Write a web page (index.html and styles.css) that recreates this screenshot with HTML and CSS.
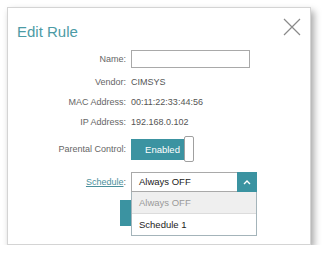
FILE: index.html
```html
<!DOCTYPE html>
<html lang="en">
<head>
    <meta charset="UTF-8">
    <meta name="viewport" content="width=device-width, initial-scale=1.0">
    <title>Edit Rule</title>
    <link rel="stylesheet" href="styles.css">
</head>
<body>
    <div class="card">
        <div class="header">
            <h1>Edit Rule</h1>
            <span class="close">
                <svg width="18" height="18" viewBox="0 0 18 18">
                    <path d="M1 1 L17 17 M17 1 L1 17" stroke="#8a8a8a" stroke-width="1.2" fill="none"/>
                </svg>
            </span>
        </div>

        <div class="row row-name">
            <label>Name:</label>
            <input type="text" class="name-input">
        </div>
        <div class="row row-text">
            <label>Vendor:</label>
            <span class="value">CIMSYS</span>
        </div>
        <div class="row row-text">
            <label>MAC Address:</label>
            <span class="value">00:11:22:33:44:56</span>
        </div>
        <div class="row row-text">
            <label>IP Address:</label>
            <span class="value">192.168.0.102</span>
        </div>
        <div class="row row-toggle">
            <label>Parental Control:</label>
            <div class="toggle">
                <span class="toggle-on">Enabled</span>
                <span class="toggle-knob"></span>
            </div>
        </div>
        <div class="row row-select">
            <label><a href="#" class="link">Schedule</a>:</label>
            <div class="select">
                <span class="select-text">Always OFF</span>
                <span class="select-arrow">
                    <svg width="8" height="6" viewBox="0 0 8 6">
                        <polyline points="1,5 4,2 7,5" stroke="#fff" stroke-width="1.4" fill="none"/>
                    </svg>
                </span>
                <ul class="options">
                    <li class="selected">Always OFF</li>
                    <li>Schedule 1</li>
                </ul>
            </div>
        </div>
        <div class="actions">
            <button class="save">Save</button>
        </div>
    </div>
</body>
</html>
```

FILE: styles.css
```css
body {
    margin: 0;
    padding: 0;
    background-color: #fff;
    font-family: 'Liberation Sans', Arial, sans-serif;
    color: #555;
}

.card {
    margin: 7px 0 0 7px;
    width: 302px;
    height: 236px;
    border: 1px solid #d4d4d4;
    background-color: #fff;
    box-shadow: 3px 4px 7px rgba(0, 0, 0, 0.35);
}

.header {
    display: flex;
    justify-content: space-between;
    align-items: flex-start;
    padding: 10px 9px 0 9px;
    height: 32px;
}

h1 {
    margin: 5px 0 0 0;
    font-size: 15px;
    font-weight: normal;
    color: #4c9ba5;
    line-height: 17px;
}

.close {
    width: 18px;
    height: 18px;
}

.row {
    display: grid;
    grid-template-columns: 118px 1fr;
    column-gap: 5px;
    align-items: center;
    font-size: 9px;
}

.row label {
    text-align: right;
    color: #666;
}

.value {
    color: #555;
}

.row-name {
    height: 18px;
    margin-bottom: 4px;
}

.name-input {
    width: 117px;
    height: 16px;
    margin: 0;
    padding: 0;
    border: 1px solid #a9a9a9;
}

.row-text {
    height: 20px;
}

.row-toggle {
    height: 26px;
    margin-top: 4px;
}

.toggle {
    display: flex;
    align-items: center;
}

.toggle-on {
    width: 53px;
    height: 21px;
    line-height: 21px;
    background-color: #3b93a1;
    color: #fff;
    font-size: 9.5px;
    text-align: center;
    padding-left: 10px;
    box-sizing: border-box;
}

.toggle-knob {
    width: 8px;
    height: 24px;
    border: 1px solid #a0a0a0;
    border-radius: 2px;
    background-color: #fff;
}

.row-select {
    height: 20px;
    margin-top: 10px;
}

.link {
    color: #4a8f9b;
    text-decoration: underline;
}

.select {
    position: relative;
    width: 126px;
    height: 20px;
    display: flex;
    box-sizing: border-box;
}

.select-text {
    flex: 1;
    border: 1px solid #a9a9a9;
    border-right: none;
    line-height: 18px;
    padding-left: 7px;
    color: #222;
    font-size: 9.5px;
}

.select-arrow {
    width: 20px;
    background-color: #3b93a1;
    display: flex;
    align-items: center;
    justify-content: center;
}

.options {
    position: absolute;
    top: 20px;
    left: 0;
    width: 126px;
    margin: 0;
    padding: 0;
    list-style: none;
    border: 1px solid #a4b4ba;
    border-top: none;
    box-sizing: border-box;
    background-color: #fff;
    z-index: 2;
}

.options li {
    height: 21px;
    line-height: 21px;
    padding-left: 7px;
    font-size: 9.5px;
    color: #222;
}

.options li.selected {
    background-color: #efefef;
    color: #9a9a9a;
    border-bottom: 1px solid #dcdcdc;
}

.actions {
    margin-top: 8px;
    padding-left: 112px;
}

.save {
    width: 80px;
    height: 26px;
    border: none;
    background-color: #3b93a1;
    color: #fff;
    font-size: 10px;
}
```
